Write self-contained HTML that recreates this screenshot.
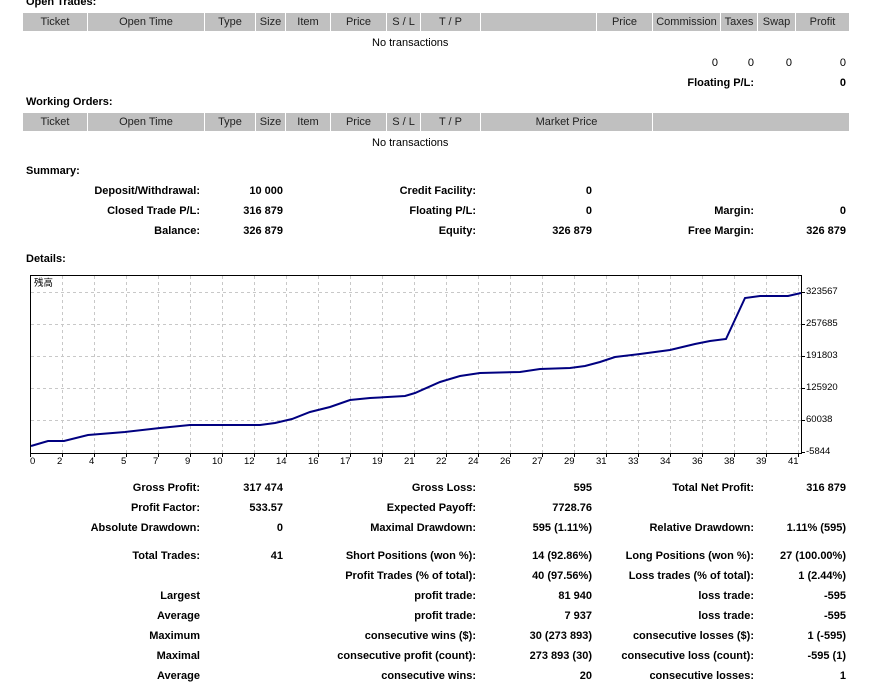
<!DOCTYPE html>
<html><head><meta charset="utf-8"><style>
*{margin:0;padding:0}
body{width:880px;height:685px;position:relative;background:#fff;font-family:"Liberation Sans","Noto Sans CJK JP",sans-serif;font-size:11px;color:#000;overflow:hidden}
.a{position:absolute;white-space:nowrap;line-height:14px;margin-top:1px}
.b{font-weight:bold}
.r{text-align:right}
.hdr{position:absolute;left:23px;width:826px;height:18px;background:#c0c0c0}
.hdr div{position:absolute;top:0;height:18px;line-height:19px;text-align:center;border-right:1px solid #fff;box-sizing:border-box;color:#222}
.ch{position:absolute;font-size:9.5px;line-height:12px}
</style></head><body>
<div class="a b" style="left:26px;top:-6px">Open Trades:</div>
<div class="hdr" style="top:13px">
<div style="left:0;width:65px">Ticket</div><div style="left:65px;width:117px">Open Time</div><div style="left:182px;width:51px">Type</div><div style="left:233px;width:30px">Size</div><div style="left:263px;width:45px">Item</div><div style="left:308px;width:56px">Price</div><div style="left:364px;width:34px">S / L</div><div style="left:398px;width:60px">T / P</div><div style="left:458px;width:116px"></div><div style="left:574px;width:56px">Price</div><div style="left:630px;width:68px">Commission</div><div style="left:698px;width:37px">Taxes</div><div style="left:735px;width:38px">Swap</div><div style="left:773px;width:53px;border:0">Profit</div>
</div>
<div class="a" style="left:372px;top:35px">No transactions</div>
<div class="a r" style="left:0;width:718px;top:55px">0</div>
<div class="a r" style="left:0;width:754px;top:55px">0</div>
<div class="a r" style="left:0;width:792px;top:55px">0</div>
<div class="a r" style="left:0;width:846px;top:55px">0</div>
<div class="a b r" style="left:0;width:754px;top:75px">Floating P/L:</div>
<div class="a b r" style="left:0;width:846px;top:75px">0</div>
<div class="a b" style="left:26px;top:94px">Working Orders:</div>
<div class="hdr" style="top:113px">
<div style="left:0;width:65px">Ticket</div><div style="left:65px;width:117px">Open Time</div><div style="left:182px;width:51px">Type</div><div style="left:233px;width:30px">Size</div><div style="left:263px;width:45px">Item</div><div style="left:308px;width:56px">Price</div><div style="left:364px;width:34px">S / L</div><div style="left:398px;width:60px">T / P</div><div style="left:458px;width:172px">Market Price</div><div style="left:630px;width:196px;border:0"></div>
</div>
<div class="a" style="left:372px;top:135px">No transactions</div>
<div class="a b" style="left:26px;top:163px">Summary:</div>

<div class="a b r" style="left:0;width:200px;top:183px">Deposit/Withdrawal:</div><div class="a b r" style="left:0;width:283px;top:183px">10 000</div>
<div class="a b r" style="left:0;width:476px;top:183px">Credit Facility:</div><div class="a b r" style="left:0;width:592px;top:183px">0</div>
<div class="a b r" style="left:0;width:200px;top:203px">Closed Trade P/L:</div><div class="a b r" style="left:0;width:283px;top:203px">316 879</div>
<div class="a b r" style="left:0;width:476px;top:203px">Floating P/L:</div><div class="a b r" style="left:0;width:592px;top:203px">0</div>
<div class="a b r" style="left:0;width:754px;top:203px">Margin:</div><div class="a b r" style="left:0;width:846px;top:203px">0</div>
<div class="a b r" style="left:0;width:200px;top:223px">Balance:</div><div class="a b r" style="left:0;width:283px;top:223px">326 879</div>
<div class="a b r" style="left:0;width:476px;top:223px">Equity:</div><div class="a b r" style="left:0;width:592px;top:223px">326 879</div>
<div class="a b r" style="left:0;width:754px;top:223px">Free Margin:</div><div class="a b r" style="left:0;width:846px;top:223px">326 879</div>
<div class="a b" style="left:26px;top:251px">Details:</div>

<svg style="position:absolute;left:0;top:0" width="880" height="470">
<g stroke="#c8c8c8" stroke-dasharray="3,3" stroke-width="1">
<path d="M62.5 276V453M94.5 276V453M126.5 276V453M158.5 276V453M190.5 276V453M222.5 276V453M254.5 276V453M286.5 276V453M318.5 276V453M350.5 276V453M382.5 276V453M414.5 276V453M446.5 276V453M478.5 276V453M510.5 276V453M542.5 276V453M574.5 276V453M606.5 276V453M638.5 276V453M670.5 276V453M702.5 276V453M734.5 276V453M766.5 276V453M798.5 276V453"/>
<path d="M31 292.5H801M31 324.5H801M31 356.5H801M31 388.5H801M31 420.5H801"/>
</g>
<rect x="30.5" y="275.5" width="771" height="178" fill="none" stroke="#000"/>
<g stroke="#000"><path d="M30.5 454v3M62.5 454v3M94.5 454v3M126.5 454v3M158.5 454v3M190.5 454v3M222.5 454v3M254.5 454v3M286.5 454v3M318.5 454v3M350.5 454v3M382.5 454v3M414.5 454v3M446.5 454v3M478.5 454v3M510.5 454v3M542.5 454v3M574.5 454v3M606.5 454v3M638.5 454v3M670.5 454v3M702.5 454v3M734.5 454v3M766.5 454v3M798.5 454v3M802 292.5h3M802 324.5h3M802 356.5h3M802 388.5h3M802 420.5h3M802 452.5h3"/></g>
<polyline fill="none" stroke="#000080" stroke-width="2" points="31,446 48,441 64,441 88,435 125,432 160,428 190,425 260,425 275,423 292,419 310,412 330,407 350,400 370,398 405,396 415,393 440,382 460,376 480,373 520,372 540,369 570,368 585,366 600,362 615,357 640,354 670,350 695,344 710,341 726,339 745,298 760,296 788,296 801,293"/>
</svg>
<div class="ch" style="left:34px;top:278px">残高</div>
<div class="ch" style="left:806px;top:286px">323567</div>
<div class="ch" style="left:806px;top:318px">257685</div>
<div class="ch" style="left:806px;top:350px">191803</div>
<div class="ch" style="left:806px;top:382px">125920</div>
<div class="ch" style="left:806px;top:414px">60038</div>
<div class="ch" style="left:806px;top:446px">-5844</div>
<div class="ch" style="left:30px;top:456px">0</div><div class="ch" style="left:57px;top:456px">2</div><div class="ch" style="left:89px;top:456px">4</div><div class="ch" style="left:121px;top:456px">5</div><div class="ch" style="left:153px;top:456px">7</div><div class="ch" style="left:185px;top:456px">9</div><div class="ch" style="left:212px;top:456px">10</div><div class="ch" style="left:244px;top:456px">12</div><div class="ch" style="left:276px;top:456px">14</div><div class="ch" style="left:308px;top:456px">16</div><div class="ch" style="left:340px;top:456px">17</div><div class="ch" style="left:372px;top:456px">19</div><div class="ch" style="left:404px;top:456px">21</div><div class="ch" style="left:436px;top:456px">22</div><div class="ch" style="left:468px;top:456px">24</div><div class="ch" style="left:500px;top:456px">26</div><div class="ch" style="left:532px;top:456px">27</div><div class="ch" style="left:564px;top:456px">29</div><div class="ch" style="left:596px;top:456px">31</div><div class="ch" style="left:628px;top:456px">33</div><div class="ch" style="left:660px;top:456px">34</div><div class="ch" style="left:692px;top:456px">36</div><div class="ch" style="left:724px;top:456px">38</div><div class="ch" style="left:756px;top:456px">39</div><div class="ch" style="left:788px;top:456px">41</div>

<div class="a b r" style="left:0;width:200px;top:480px">Gross Profit:</div><div class="a b r" style="left:0;width:283px;top:480px">317 474</div>
<div class="a b r" style="left:0;width:476px;top:480px">Gross Loss:</div><div class="a b r" style="left:0;width:592px;top:480px">595</div>
<div class="a b r" style="left:0;width:754px;top:480px">Total Net Profit:</div><div class="a b r" style="left:0;width:846px;top:480px">316 879</div>
<div class="a b r" style="left:0;width:200px;top:500px">Profit Factor:</div><div class="a b r" style="left:0;width:283px;top:500px">533.57</div>
<div class="a b r" style="left:0;width:476px;top:500px">Expected Payoff:</div><div class="a b r" style="left:0;width:592px;top:500px">7728.76</div>
<div class="a b r" style="left:0;width:200px;top:520px">Absolute Drawdown:</div><div class="a b r" style="left:0;width:283px;top:520px">0</div>
<div class="a b r" style="left:0;width:476px;top:520px">Maximal Drawdown:</div><div class="a b r" style="left:0;width:592px;top:520px">595 (1.11%)</div>
<div class="a b r" style="left:0;width:754px;top:520px">Relative Drawdown:</div><div class="a b r" style="left:0;width:846px;top:520px">1.11% (595)</div>
<div class="a b r" style="left:0;width:200px;top:548px">Total Trades:</div><div class="a b r" style="left:0;width:283px;top:548px">41</div>
<div class="a b r" style="left:0;width:476px;top:548px">Short Positions (won %):</div><div class="a b r" style="left:0;width:592px;top:548px">14 (92.86%)</div>
<div class="a b r" style="left:0;width:754px;top:548px">Long Positions (won %):</div><div class="a b r" style="left:0;width:846px;top:548px">27 (100.00%)</div>
<div class="a b r" style="left:0;width:476px;top:568px">Profit Trades (% of total):</div><div class="a b r" style="left:0;width:592px;top:568px">40 (97.56%)</div>
<div class="a b r" style="left:0;width:754px;top:568px">Loss trades (% of total):</div><div class="a b r" style="left:0;width:846px;top:568px">1 (2.44%)</div>
<div class="a b r" style="left:0;width:200px;top:588px">Largest</div>
<div class="a b r" style="left:0;width:476px;top:588px">profit trade:</div><div class="a b r" style="left:0;width:592px;top:588px">81 940</div>
<div class="a b r" style="left:0;width:754px;top:588px">loss trade:</div><div class="a b r" style="left:0;width:846px;top:588px">-595</div>
<div class="a b r" style="left:0;width:200px;top:608px">Average</div>
<div class="a b r" style="left:0;width:476px;top:608px">profit trade:</div><div class="a b r" style="left:0;width:592px;top:608px">7 937</div>
<div class="a b r" style="left:0;width:754px;top:608px">loss trade:</div><div class="a b r" style="left:0;width:846px;top:608px">-595</div>
<div class="a b r" style="left:0;width:200px;top:628px">Maximum</div>
<div class="a b r" style="left:0;width:476px;top:628px">consecutive wins ($):</div><div class="a b r" style="left:0;width:592px;top:628px">30 (273 893)</div>
<div class="a b r" style="left:0;width:754px;top:628px">consecutive losses ($):</div><div class="a b r" style="left:0;width:846px;top:628px">1 (-595)</div>
<div class="a b r" style="left:0;width:200px;top:648px">Maximal</div>
<div class="a b r" style="left:0;width:476px;top:648px">consecutive profit (count):</div><div class="a b r" style="left:0;width:592px;top:648px">273 893 (30)</div>
<div class="a b r" style="left:0;width:754px;top:648px">consecutive loss (count):</div><div class="a b r" style="left:0;width:846px;top:648px">-595 (1)</div>
<div class="a b r" style="left:0;width:200px;top:668px">Average</div>
<div class="a b r" style="left:0;width:476px;top:668px">consecutive wins:</div><div class="a b r" style="left:0;width:592px;top:668px">20</div>
<div class="a b r" style="left:0;width:754px;top:668px">consecutive losses:</div><div class="a b r" style="left:0;width:846px;top:668px">1</div>
</body></html>
